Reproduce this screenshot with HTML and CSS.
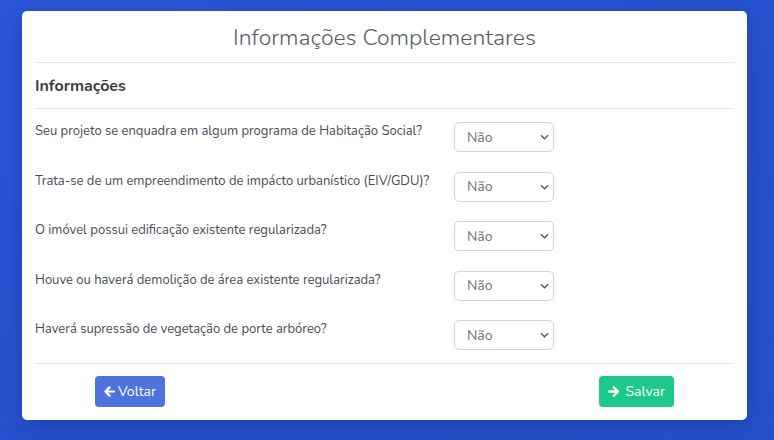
FILE: index.html
```html
<!DOCTYPE html>
<html lang="pt-BR">
<head>
<meta charset="UTF-8">
<meta name="viewport" content="width=device-width, initial-scale=1.0">
<title>Informações Complementares</title>
<link rel="stylesheet" href="styles.css">
</head>
<body>
<div class="card">
  <h1 class="title">Informações Complementares</h1>
  <hr>
  <h2 class="section">Informações</h2>
  <hr>
  <div class="rows">
    <div class="row">
      <label>Seu projeto se enquadra em algum programa de Habitação Social?</label>
      <div class="select">Não<svg viewBox="0 0 10 6" width="9" height="6"><path d="M1 1l4 4 4-4" fill="none" stroke="#555" stroke-width="1.4"/></svg></div>
    </div>
    <div class="row">
      <label>Trata-se de um empreendimento de impácto urbanístico (EIV/GDU)?</label>
      <div class="select">Não<svg viewBox="0 0 10 6" width="9" height="6"><path d="M1 1l4 4 4-4" fill="none" stroke="#555" stroke-width="1.4"/></svg></div>
    </div>
    <div class="row">
      <label>O imóvel possui edificação existente regularizada?</label>
      <div class="select">Não<svg viewBox="0 0 10 6" width="9" height="6"><path d="M1 1l4 4 4-4" fill="none" stroke="#555" stroke-width="1.4"/></svg></div>
    </div>
    <div class="row">
      <label>Houve ou haverá demolição de área existente regularizada?</label>
      <div class="select">Não<svg viewBox="0 0 10 6" width="9" height="6"><path d="M1 1l4 4 4-4" fill="none" stroke="#555" stroke-width="1.4"/></svg></div>
    </div>
    <div class="row">
      <label>Haverá supressão de vegetação de porte arbóreo?</label>
      <div class="select">Não<svg viewBox="0 0 10 6" width="9" height="6"><path d="M1 1l4 4 4-4" fill="none" stroke="#555" stroke-width="1.4"/></svg></div>
    </div>
  </div>
  <hr>
  <div class="actions">
    <button class="btn btn-primary"><svg viewBox="0 0 12 12" width="13" height="13"><path d="M11 6H2M6 1.5L1.5 6 6 10.5" fill="none" stroke="#fff" stroke-width="2.4" stroke-linecap="round" stroke-linejoin="round"/></svg>Voltar</button>
    <button class="btn btn-success"><svg viewBox="0 0 12 12" width="13" height="13"><path d="M1 6h9M6 1.5L10.5 6 6 10.5" fill="none" stroke="#fff" stroke-width="2.4" stroke-linecap="round" stroke-linejoin="round"/></svg>Salvar</button>
  </div>
</div>
</body>
</html>
```

FILE: styles.css
```css
*{
  margin: 0;
  padding: 0;
  box-sizing: border-box;
}
body{
  height: 440px;
  padding: 11px 27px 0 22px;
  background: linear-gradient(160deg, #2b56d7 0%, #2650cd 60%, #2451c9 100%);
  font-family: "Nunito", "Lato", "Noto Sans", sans-serif;
  color: #5a5c69;
  overflow: hidden;
}
.card{
  width: 725px;
  height: 409px;
  padding: 0 13px;
  background-color: #fff;
  border-radius: 5px;
  box-shadow: 0 4px 20px rgba(20, 40, 120, .35);
}
.title{
  height: 51px;
  padding-top: 11px;
  font-size: 23px;
  font-weight: 300;
  text-align: center;
  color: #5a5c69;
}
hr{
  border: 0;
  border-top: 1px solid #e3e6f0;
}
.section{
  height: 45px;
  padding-top: 12px;
  font-size: 16px;
  font-weight: 700;
  color: #3a3b45;
}
.rows{
  padding-top: 13px;
  height: 254px;
}
.row{
  display: grid;
  grid-template-columns: 419px 100px;
  height: 49.5px;
}
.row label{
  font-size: 13px;
  color: #4a4b55;
}
.select{
  display: flex;
  align-items: center;
  justify-content: space-between;
  height: 30px;
  padding: 0 4px 0 12px;
  border: 1px solid #d1d3e2;
  border-radius: 5px;
  font-size: 14px;
  color: #6e707e;
}
.actions{
  display: flex;
  justify-content: space-between;
  padding: 12px 60px 0;
}
.btn{
  display: flex;
  align-items: center;
  gap: 3px;
  height: 31px;
  padding: 0 9px;
  border: 0;
  border-radius: 4px;
  font-family: inherit;
  font-size: 14px;
  color: #fff;
}
.btn-primary{
  width: 70px;
  background-color: #4e73df;
}
.btn-success{
  width: 75px;
  gap: 6px;
  background-color: #1cc88a;
}
```
